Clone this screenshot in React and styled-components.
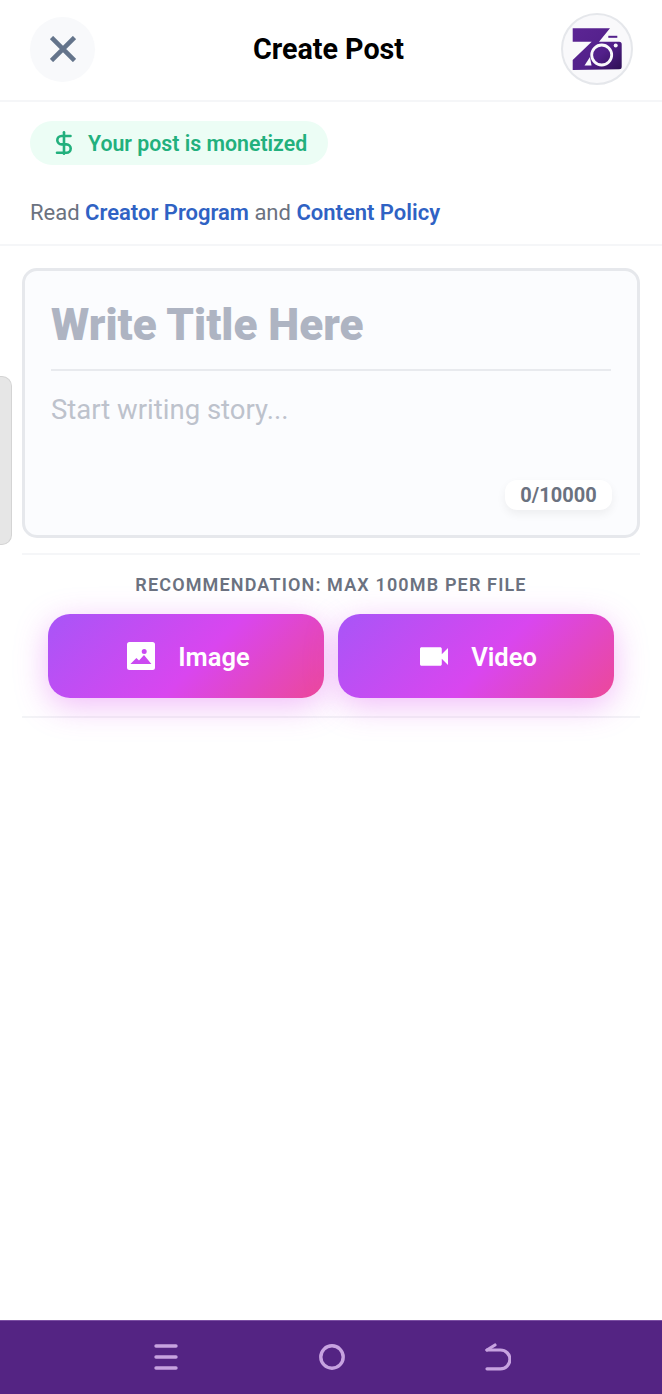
import React from 'react';
import styled, { createGlobalStyle } from 'styled-components';

const GlobalStyle = createGlobalStyle`
  html, body {
    margin: 0;
    padding: 0;
    background: #fff;
    font-family: Roboto, "Liberation Sans", sans-serif;
  }
`;

const Page = styled.div`
  position: relative;
  width: 662px;
  height: 1394px;
  overflow: hidden;
  display: flex;
  flex-direction: column;
  background: #fff;
`;

const Header = styled.header`
  height: 102px;
  flex: none;
  box-sizing: border-box;
  padding: 0 29px 0 30px;
  display: flex;
  align-items: center;
  justify-content: space-between;
  border-bottom: 2px solid #f5f6f8;
`;

const CloseButton = styled.button`
  width: 65px;
  height: 65px;
  border: none;
  padding: 0;
  margin-bottom: 2px;
  border-radius: 50%;
  background: #f8f9fb;
  display: flex;
  align-items: center;
  justify-content: center;
  color: #64748b;
`;

const Title = styled.h1`
  margin: 0 0 3px 1px;
  font-size: 28.7px;
  line-height: 32px;
  font-weight: 700;
  color: #000;
`;

const Avatar = styled.div`
  width: 72px;
  height: 72px;
  box-sizing: border-box;
  border-radius: 50%;
  border: 2px solid #e5e7eb;
  background: #f9f9fb;
  margin-bottom: 3px;
`;

const InfoSection = styled.section`
  flex: none;
  height: 144px;
  box-sizing: border-box;
  padding: 19px 30px 0;
  border-bottom: 2px solid #f5f6f8;
`;

const MoneyPill = styled.div`
  width: 298px;
  height: 44px;
  box-sizing: border-box;
  padding-left: 25px;
  border-radius: 22px;
  background: #ecfdf5;
  color: #22b07d;
  display: flex;
  align-items: center;
  gap: 15px;
  font-size: 21.3px;
  font-weight: 600;
`;

const PolicyLine = styled.p`
  margin: 35px 0 0;
  font-size: 22px;
  line-height: 26px;
  color: #6b7280;
`;

const PolicyLink = styled.a`
  color: #2f62c4;
  font-weight: 600;
`;

const SideHandle = styled.div`
  position: absolute;
  left: 0;
  top: 376px;
  width: 12px;
  height: 169px;
  box-sizing: border-box;
  background: #e6e6e6;
  border: 1px solid #d4d4d4;
  border-left: none;
  border-radius: 0 10px 10px 0;
`;

const Content = styled.main`
  flex: 1;
  padding: 22px 22px 0;
`;

const EditorCard = styled.div`
  position: relative;
  height: 270px;
  box-sizing: border-box;
  padding: 0 26px;
  border: 3px solid #e6e8ec;
  border-radius: 15px;
  background: #fbfcfe;
`;

const TitleField = styled.div`
  height: 100px;
  box-sizing: border-box;
  padding-top: 29px;
  border-bottom: 2px solid #e8eaee;
  font-size: 44px;
  line-height: 50px;
  font-weight: 900;
  color: #aeb4c2;
`;

const StoryField = styled.div`
  margin-top: 23px;
  font-size: 27.5px;
  line-height: 32px;
  color: #bdc2cc;
`;

const Counter = styled.div`
  position: absolute;
  right: 25px;
  bottom: 25px;
  width: 107px;
  height: 30px;
  border-radius: 12px;
  background: #fff;
  box-shadow: 0 4px 10px rgba(0, 0, 0, 0.06);
  display: flex;
  align-items: center;
  justify-content: center;
  font-size: 20px;
  font-weight: 700;
  color: #6b7280;
`;

const UploadSection = styled.section`
  margin-top: 15px;
  height: 165px;
  box-sizing: border-box;
  padding-top: 19px;
  border-top: 2px solid #f5f6f8;
  border-bottom: 2px solid #f3f4f6;
`;

const Recommendation = styled.div`
  text-align: center;
  font-size: 18px;
  line-height: 22px;
  font-weight: 600;
  letter-spacing: 1.15px;
  color: #6b7280;
`;

const ButtonRow = styled.div`
  margin-top: 18px;
  padding: 0 26px;
  display: grid;
  grid-template-columns: 1fr 1fr;
  gap: 14px;
`;

const UploadButton = styled.button`
  height: 84px;
  border: none;
  padding: 0 0 0 5px;
  border-radius: 22px;
  background: linear-gradient(135deg, #a855f7 0%, #d946ef 55%, #ec4899 100%);
  box-shadow: 0 8px 32px rgba(217, 70, 239, 0.36);
  display: flex;
  align-items: center;
  justify-content: center;
  gap: 23px;
  color: #fff;
  font-family: inherit;
  font-size: 25.5px;
  font-weight: 600;
`;

const ButtonLabel = styled.span`
  padding-top: 2px;
`;

const BottomNav = styled.nav`
  flex: none;
  height: 74px;
  box-sizing: border-box;
  padding: 0 151px 2px 154px;
  background: #542483;
  border-top: 1px solid #7b4fa3;
  display: flex;
  align-items: center;
  justify-content: space-between;
  color: #c7a3e0;
`;

const CloseIcon = () => (
  <svg width="26" height="26" viewBox="0 0 26 26" fill="none" stroke="currentColor" strokeWidth="4.6" strokeLinecap="butt">
    <path d="M1.5 1.5 24.5 24.5M24.5 1.5 1.5 24.5" />
  </svg>
);

const DollarIcon = () => (
  <svg width="18" height="24" viewBox="0 0 18 24" fill="none" stroke="currentColor" strokeWidth="2.6" strokeLinecap="round" strokeLinejoin="round">
    <path d="M9 1.3v21.4" />
    <path d="M15.5 5H6.5a4.2 4.2 0 0 0 0 8.4h5a4.2 4.2 0 0 1 0 8.4H2" />
  </svg>
);

const ImageIcon = () => (
  <svg width="28" height="28" viewBox="0 0 28 28" fill="#fff">
    <path
      fillRule="evenodd"
      d="M2.5 0h23A2.5 2.5 0 0 1 28 2.5v23a2.5 2.5 0 0 1-2.5 2.5h-23A2.5 2.5 0 0 1 0 25.5v-23A2.5 2.5 0 0 1 2.5 0ZM3.4 22h21L17 13l-5 5.5-2.6-2.5ZM17.2 12a2.5 2.5 0 1 0 0-5 2.5 2.5 0 0 0 0 5Z"
    />
  </svg>
);

const VideoIcon = () => (
  <svg width="28" height="19" viewBox="3 6 18 12" fill="#fff">
    <path d="M17 10.5V7c0-.55-.45-1-1-1H4c-.55 0-1 .45-1 1v10c0 .55.45 1 1 1h12c.55 0 1-.45 1-1v-3.5l4 4v-11l-4 4z" />
  </svg>
);

const LogoMark = () => (
  <svg width="68" height="68" viewBox="2 2 68 68">
    <defs>
      <linearGradient id="logoFill" x1="0" y1="0" x2="1" y2="1">
        <stop offset="0" stopColor="#5c2594" />
        <stop offset="0.6" stopColor="#52208a" />
        <stop offset="1" stopColor="#2c0f52" />
      </linearGradient>
    </defs>
    <path
      fill="url(#logoFill)"
      d="M11.7 15.3H49L38 28.7h20.2a2.5 2.5 0 0 1 2.5 2.5v22.6a2.5 2.5 0 0 1-2.5 2.5L11.7 57V47l19-18.3h-19Z"
    />
    <rect x="47.3" y="22.8" width="9" height="2" fill="#52208a" />
    <circle cx="40.7" cy="42" r="10" fill="none" stroke="#f9f9fb" strokeWidth="2.8" />
    <circle cx="54.7" cy="32.5" r="2" fill="#f9f9fb" />
    <path d="M29 44 30.5 52.5H23.5Z" fill="#f9f9fb" />
  </svg>
);

const MenuIcon = () => (
  <svg width="24" height="26" viewBox="0 0 24 26" fill="none" stroke="currentColor" strokeWidth="3.4" strokeLinecap="round">
    <path d="M2 2h20M2 13h20M2 24h20" />
  </svg>
);

const HomeIcon = () => (
  <svg width="26" height="26" viewBox="0 0 26 26" fill="none" stroke="currentColor" strokeWidth="3.4">
    <circle cx="13" cy="13" r="11.2" />
  </svg>
);

const BackIcon = () => (
  <svg width="26" height="28" viewBox="0 0 26 28" fill="none" stroke="currentColor" strokeWidth="3.2" strokeLinecap="round" strokeLinejoin="round">
    <path d="M2 7h13.5a9.2 9.2 0 0 1 0 18.8H2" />
    <path d="M2 7 10 2" />
  </svg>
);

export default function App() {
  return (
    <>
      <GlobalStyle />
      <Page>
        <Header>
          <CloseButton aria-label="Close">
            <CloseIcon />
          </CloseButton>
          <Title>Create Post</Title>
          <Avatar>
            <LogoMark />
          </Avatar>
        </Header>

        <InfoSection>
          <MoneyPill>
            <DollarIcon />
            Your post is monetized
          </MoneyPill>
          <PolicyLine>
            Read <PolicyLink>Creator Program</PolicyLink> and <PolicyLink>Content Policy</PolicyLink>
          </PolicyLine>
        </InfoSection>

        <SideHandle />

        <Content>
          <EditorCard>
            <TitleField>Write Title Here</TitleField>
            <StoryField>Start writing story...</StoryField>
            <Counter>0/10000</Counter>
          </EditorCard>

          <UploadSection>
            <Recommendation>RECOMMENDATION: MAX 100MB PER FILE</Recommendation>
            <ButtonRow>
              <UploadButton>
                <ImageIcon />
                <ButtonLabel>Image</ButtonLabel>
              </UploadButton>
              <UploadButton>
                <VideoIcon />
                <ButtonLabel>Video</ButtonLabel>
              </UploadButton>
            </ButtonRow>
          </UploadSection>
        </Content>

        <BottomNav>
          <MenuIcon />
          <HomeIcon />
          <BackIcon />
        </BottomNav>
      </Page>
    </>
  );
}
